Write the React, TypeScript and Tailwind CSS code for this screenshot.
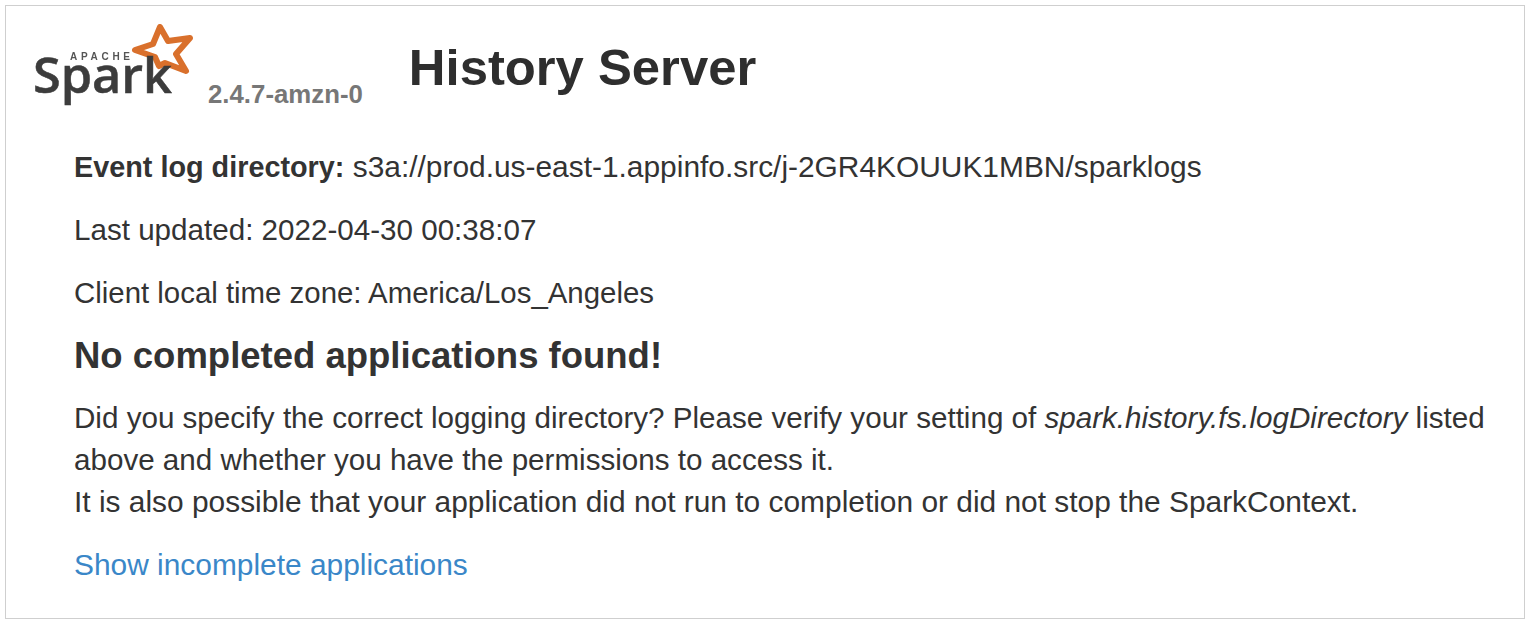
function SparkLogo() {
  return (
    <svg width="164" height="84" viewBox="0 0 164 84" className="shrink-0 blur-[0.5px]">
      {/* star */}
      <path
        d="M127 3 L135 17 L157 14 L143 30 L153 47 L132 39 L126 42 L122 33 L102 26 L120 20 Z"
        fill="none"
        stroke="#d9702c"
        strokeWidth="6"
        strokeLinejoin="round"
      />
      <text x="37" y="36" textLength="60" fontFamily="'Liberation Sans', sans-serif" fontWeight="700" fontSize="10" fill="#555">
        APACHE
      </text>
      <text x="0" y="69" textLength="139" lengthAdjust="spacingAndGlyphs" fontFamily="'Open Sans', sans-serif" fontWeight="600" fontSize="48" fill="#3c3c3c" stroke="#3c3c3c" strokeWidth="0.5">
        Spark
      </text>
    </svg>
  );
}

export default function App() {
  return (
    <div className="h-[627px] w-[1530px] bg-white p-[5px] font-['Liberation_Sans',Arial,sans-serif] text-[#333]">
      <div className="h-[614px] w-[1520px] border border-[#cfcfcf] pl-[27px] pr-[30px] pt-[18px]">
        <div className="flex h-[88px] items-start">
          <SparkLogo />
          <span className="mt-[56px] ml-[11px] text-[25.8px] font-bold leading-[28px] text-[#777]">2.4.7-amzn-0</span>
          <h3 className="mt-[14px] ml-[46px] text-[50.8px] font-bold leading-[60px] text-[#2e2e2e]">History Server</h3>
        </div>
        <div className="pl-[41px] text-[29.9px] leading-[42px]">
          <p className="mt-[34px]"><strong className="text-[28.8px]">Event log directory:</strong> s3a://prod.us-east-1.appinfo.src/j-2GR4KOUUK1MBN/sparklogs</p>
          <p className="mt-[21px] text-[29.6px]">Last updated: 2022-04-30 00:38:07</p>
          <p className="mt-[21px] text-[29.4px]">Client local time zone: America/Los_Angeles</p>
          <h4 className="mt-[21px] text-[36.5px] font-bold leading-[42px]">No completed applications found!</h4>
          <p className="mt-[20px] text-[29.6px]">
            Did you specify the correct logging directory? Please verify your setting of <em>spark.history.fs.logDirectory</em> listed above and whether you have the permissions to access it.
            <br />
            <span className="text-[29.9px]">It is also possible that your application did not run to completion or did not stop the SparkContext.</span>
          </p>
          <p className="mt-[21px]"><a href="#" className="text-[#3a87c8]">Show incomplete applications</a></p>
        </div>
      </div>
    </div>
  );
}
